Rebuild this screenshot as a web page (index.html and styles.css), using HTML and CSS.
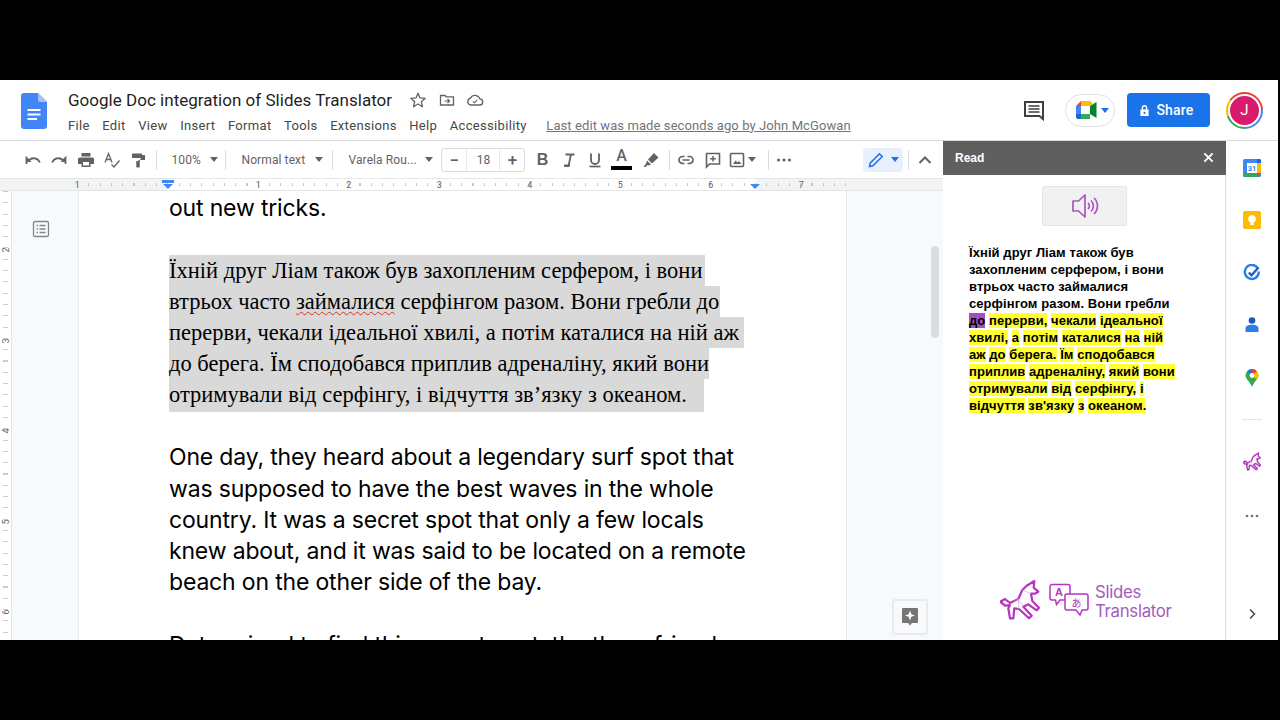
FILE: index.html
```html
<!DOCTYPE html>
<html lang="en">
<head>
<meta charset="utf-8">
<title>Google Doc integration of Slides Translator</title>
<link rel="stylesheet" href="styles.css">
</head>
<body>
<svg class="defs" width="0" height="0" aria-hidden="true">
  <symbol id="unicorn" viewBox="0 0 40 42">
    <path class="uni-line" d="M.3 21.700 5 19 10 23 18.300 19 22.300 10 26.700 5.700 34.300 1 33.700 7.700 38.300 11.700 35 13.700 31 13.700 32.300 21 39 27.700 36.700 30.300 28.300 24.300 23.300 26.700 31.700 35.700 29 38.300 19 29 14.300 28.300 13.300 38.300 10 38.300 8.300 28.300 10 25 5 25.700Z"/>
    <path d="M10 25 18.300 19 23.300 26.700M18.300 19 19 29M22.300 10 31 13.700" fill="none" stroke="#d9a6dc" stroke-width=".7"/>
  </symbol>
</svg>
<main class="app">
  <header class="top">
    <svg class="doc-logo" viewBox="0 0 26 36" width="26" height="36"><path d="M3 0H17L26 9V33A3 3 0 0 1 23 36H3A3 3 0 0 1 0 33V3A3 3 0 0 1 3 0Z" fill="#4285f4"/><path d="M17 0 26 9H19A2 2 0 0 1 17 7Z" fill="#a1c2fa"/><path d="M6.500 16H19.500V18H6.500ZM6.500 20.500H19.500V22.500H6.500ZM6.500 25H16V27H6.500Z" fill="#fff"/></svg>
    <div class="titles">
      <div class="title-row">
        <h1 class="title">Google Doc integration of Slides Translator</h1>
        <svg class="ti" viewBox="0 0 18 18" width="18" height="18"><path d="M9 2.200 11 6.900 16.200 7.300 12.300 10.700 13.500 15.700 9 13 4.500 15.700 5.700 10.700 1.800 7.300 7 6.900Z" fill="none" stroke="#5f6368" stroke-width="1.300" stroke-linejoin="round"/></svg>
        <svg class="ti" viewBox="0 0 18 18" width="18" height="18"><path d="M2.500 4.500H7L8.300 5.800H15.500V14H2.500Z" fill="none" stroke="#5f6368" stroke-width="1.300"/><path d="M6.500 10H11M9.500 8 11.500 10 9.500 12" fill="none" stroke="#5f6368" stroke-width="1.200"/></svg>
        <svg class="ti" viewBox="0 0 18 18" width="18" height="18"><path d="M5 14A3.500 3.500 0 0 1 4.500 7.100 5 5 0 0 1 13.800 7.900 3 3 0 0 1 13.500 14Z" fill="none" stroke="#5f6368" stroke-width="1.300"/><path d="M6.800 10.300 8.500 11.800 11.300 8.800" fill="none" stroke="#5f6368" stroke-width="1.100"/></svg>
      </div>
      <nav class="menu">
        <span>File</span><span>Edit</span><span>View</span><span>Insert</span><span>Format</span><span>Tools</span><span>Extensions</span><span>Help</span><span>Accessibility</span>
        <a class="last-edit">Last edit was made seconds ago by John McGowan</a>
      </nav>
    </div>
    <div class="top-right">
      <svg class="chat" viewBox="0 0 22 22" width="22" height="22"><path d="M2 3H20V20L16.500 17H2Z" fill="none" stroke="#3c4043" stroke-width="2"/><path d="M5.500 7H16.500M5.500 10H16.500M5.500 13H16.500" stroke="#3c4043" stroke-width="1.700"/></svg>
      <div class="meet">
        <svg viewBox="0 0 21 19" width="21" height="19"><path d="M5 0V5H0Z" fill="#ea4335"/><path d="M5 0H14V5H5Z" fill="#fbbc04"/><path d="M0 5H5V13H0Z" fill="#4285f4"/><path d="M0 13H5V18H2A2 2 0 0 1 0 16Z" fill="#1967d2"/><path d="M5 13H14V18H5Z" fill="#34a853"/><path d="M14 5 20.500 1V17L14 13Z" fill="#00832d"/><path d="M14 0 14 5 17 3Z" fill="#fbbc04"/></svg>
        <i class="caret caret-blue"></i>
      </div>
      <button class="share">
        <svg viewBox="0 0 12 14" width="11" height="13"><path d="M3 6V4A3 3 0 0 1 9 4V6H10.500V13H1.500V6ZM4.500 6H7.500V4A1.500 1.500 0 0 0 4.500 4Z" fill="#fff" fill-rule="evenodd"/><circle cx="6" cy="9.500" r="1.200" fill="#1a73e8"/></svg>
        <span>Share</span>
      </button>
      <div class="avatar"><span>J</span></div>
    </div>
  </header>

  <div class="workspace">
    <div class="editor">
      <div class="toolbar">
        <span class="tb w-undo"><svg viewBox="0 0 18 18" width="18" height="18"><path d="M2.500 13V6.800L5 9.300A6.500 6.500 0 0 1 15.800 11.500" fill="none" stroke="#5f6368" stroke-width="1.800"/><path d="M2 5.500V11H7.500Z" fill="#5f6368"/></svg></span>
        <span class="tb"><svg viewBox="0 0 18 18" width="18" height="18"><path d="M15.500 13V6.800L13 9.300A6.500 6.500 0 0 0 2.200 11.500" fill="none" stroke="#5f6368" stroke-width="1.800"/><path d="M16 5.500V11H10.500Z" fill="#5f6368"/></svg></span>
        <span class="tb"><svg viewBox="0 0 18 18" width="18" height="18"><path d="M4.500 2H13.500V5.500H4.500ZM2.500 6.500H15.500A1.500 1.500 0 0 1 17 8V13H13.500V16H4.500V13H1V8A1.500 1.500 0 0 1 2.500 6.500ZM6 11V14.500H12V11Z" fill="#5f6368" fill-rule="evenodd"/></svg></span>
        <span class="tb"><svg viewBox="0 0 18 18" width="18" height="18"><path d="M2 11.500 5.500 2.500 9 11.500M3.300 8.500H7.700" fill="none" stroke="#5f6368" stroke-width="1.300"/><path d="M8.500 13.500 11 16 16.500 9.500" fill="none" stroke="#5f6368" stroke-width="1.300"/></svg></span>
        <span class="tb"><svg viewBox="0 0 18 18" width="18" height="18"><path d="M3 2.500H13V7H3ZM13 4H16V9H9.500V10.500H7.500V16H10.500V10.500" fill="#5f6368"/><path d="M7.500 10H10.500V16.500H7.500Z" fill="#5f6368"/></svg></span>
        <i class="sep sep-1"></i>
        <span class="sel sel-zoom"><span>100%</span><i class="caret"></i></span>
        <i class="sep"></i>
        <span class="sel sel-style"><span>Normal text</span><i class="caret"></i></span>
        <i class="sep"></i>
        <span class="sel sel-font"><span>Varela Rou...</span><i class="caret"></i></span>
        <div class="size">
          <span class="size-btn">−</span><span class="size-val">18</span><span class="size-btn">+</span>
        </div>
        <span class="tb tb-b"><b class="fmt">B</b></span>
        <span class="tb"><svg viewBox="0 0 18 18" width="18" height="18"><path d="M4.500 15H8.500L11 3.500H14.500M5.500 3.500H14.500M4 14.500H10" fill="none" stroke="#5f6368" stroke-width="1.800"/></svg></span>
        <span class="tb"><svg viewBox="0 0 18 18" width="18" height="18"><path d="M5 2.500V9A4 4 0 0 0 13 9V2.500" fill="none" stroke="#5f6368" stroke-width="1.800"/><path d="M3.500 15.500H14.500" stroke="#5f6368" stroke-width="1.700"/></svg></span>
        <span class="tb tb-color"><span class="letter-a">A</span><i class="color-bar"></i></span>
        <span class="tb tb-marker"><svg viewBox="0 0 18 18" width="18" height="18"><path d="M12 2 16.500 6.500 10 12.500 6 8.500ZM5 9.500 9 13.500 7 14.500 5.500 14 3.500 16H1.500L4 12.500Z" fill="#5f6368"/></svg></span>
        <i class="sep sep-2"></i>
        <span class="tb"><svg viewBox="0 0 18 18" width="18" height="18"><path d="M7.500 5.500H5.500A3.500 3.500 0 0 0 5.500 12.500H7.500M10.500 5.500H12.500A3.500 3.500 0 0 1 12.500 12.500H10.500M5.500 9H12.500" fill="none" stroke="#5f6368" stroke-width="1.700"/></svg></span>
        <span class="tb tb-note"><svg viewBox="0 0 18 18" width="18" height="18"><path d="M2.500 2.500H15.500V13H5.500L2.500 16Z" fill="none" stroke="#5f6368" stroke-width="1.600"/><path d="M9 5V10.500M6.200 7.800H11.800" stroke="#5f6368" stroke-width="1.500"/></svg></span>
        <span class="tb tb-img"><svg viewBox="0 0 18 18" width="18" height="18"><rect x="2.500" y="2.500" width="13" height="13" rx="1" fill="none" stroke="#5f6368" stroke-width="1.600"/><path d="M5 13 7.500 9.500 9.500 11.500 11 10 13.500 13Z" fill="#5f6368"/></svg><i class="caret"></i></span>
        <i class="sep sep-3"></i>
        <span class="tb tb-dots"><svg viewBox="0 0 18 18" width="18" height="18"><circle cx="3.500" cy="9" r="1.500" fill="#5f6368"/><circle cx="9" cy="9" r="1.500" fill="#5f6368"/><circle cx="14.500" cy="9" r="1.500" fill="#5f6368"/></svg></span>
        <span class="mode"><svg viewBox="0 0 18 18" width="18" height="18"><path d="M2.500 15.500 3.300 12 12.500 2.800 15.200 5.500 6 14.700Z" fill="none" stroke="#1a73e8" stroke-width="1.500"/></svg><i class="caret caret-blue"></i></span>
        <i class="sep sep-4"></i>
        <span class="tb tb-up"><svg viewBox="0 0 18 18" width="18" height="18"><path d="M3.500 12 9 6.500 14.500 12" fill="none" stroke="#5f6368" stroke-width="2"/></svg></span>
      </div>

      <div class="ruler">
        <div class="ruler-nums">
          <span>1</span><span class="zero"><i class="indent"></i></span><span>1</span><span>2</span><span>3</span><span>4</span><span>5</span><span>6</span><span>7</span>
        </div>
        <i class="indent-right"></i>
      </div>

      <div class="doc-area">
        <aside class="v-ruler">
          <span>2</span><span>3</span><span>4</span><span>5</span><span>6</span>
        </aside>
        <div class="gutter">
          <svg viewBox="0 0 18 18" width="18" height="18"><rect x="1.500" y="1.500" width="15" height="15" rx="1.500" fill="none" stroke="#80868b" stroke-width="1.300"/><path d="M4.500 5.500H6M7.500 5.500H13.500M4.500 9H6M7.500 9H13.500M4.500 12.500H6M7.500 12.500H13.500" stroke="#80868b" stroke-width="1.300"/></svg>
        </div>
        <article class="page">
          <p class="en">out new tricks.</p>
          <div class="uk">
            <div class="hl">Їхній друг Ліам також був захопленим серфером, і вони</div>
            <div class="hl hl-2">втрьох часто <span class="spell">займалися</span> серфінгом разом. Вони гребли до</div>
            <div class="hl hl-3">перерви, чекали ідеальної хвилі, а потім каталися на ній аж</div>
            <div class="hl hl-4">до берега. Їм сподобався приплив адреналіну, який вони</div>
            <div class="hl hl-5">отримували від серфінгу, і відчуття зв’язку з океаном.</div>
          </div>
          <p class="en">One day, they heard about a legendary surf spot that<br>was supposed to have the best waves in the whole<br>country. It was a secret spot that only a few locals<br>knew about, and it was said to be located on a remote<br>beach on the other side of the bay.</p>
          <p class="en">Determined to find this secret spot, the three friends</p>
        </article>
        <div class="doc-right">
          <i class="thumb"></i>
          <button class="explore"><svg viewBox="0 0 18 20" width="18" height="20"><path d="M2 1H16A1 1 0 0 1 17 2V15A1 1 0 0 1 16 16H11L9 18.500 7 16H2A1 1 0 0 1 1 15V2A1 1 0 0 1 2 1Z" fill="#757575"/><path d="M9 3.500 10.300 7.200 14 8.500 10.300 9.800 9 13.500 7.700 9.800 4 8.500 7.700 7.200Z" fill="#fff"/></svg></button>
        </div>
      </div>
    </div>

    <aside class="panel">
      <div class="panel-head"><span>Read</span><svg viewBox="0 0 12 12" width="11" height="11"><path d="M1.500 1.500 10.500 10.500M10.500 1.500 1.500 10.500" stroke="#fff" stroke-width="2"/></svg></div>
      <div class="panel-body">
        <button class="speak"><svg viewBox="0 0 28 26" width="28" height="26"><path d="M2 8H7.500L14 2V24L7.500 18H2Z" fill="none" stroke="#a855c0" stroke-width="1.700" stroke-linejoin="round"/><path d="M17 10A4 4 0 0 1 17 16M20 7.500A7.500 7.500 0 0 1 20 18.500M23 5A11 11 0 0 1 23 21" fill="none" stroke="#a855c0" stroke-width="1.700"/></svg></button>
        <div class="read-text">
          <div>Їхній друг Ліам також був</div>
          <div>захопленим серфером, і вони</div>
          <div>втрьох часто займалися</div>
          <div>серфінгом разом. Вони гребли</div>
          <div><mark class="cur">до</mark> <mark>перерви,</mark> <mark>чекали</mark> <mark>ідеальної</mark></div>
          <div><mark>хвилі,</mark> <mark>а</mark> <mark>потім</mark> <mark>каталися</mark> <mark>на</mark> <mark>ній</mark></div>
          <div><mark>аж</mark> <mark>до</mark> <mark>берега.</mark> <mark>Їм</mark> <mark>сподобався</mark></div>
          <div><mark>приплив</mark> <mark>адреналіну,</mark> <mark>який</mark> <mark>вони</mark></div>
          <div><mark>отримували</mark> <mark>від</mark> <mark>серфінгу,</mark> <mark>і</mark></div>
          <div><mark>відчуття</mark> <mark>зв'язку</mark> <mark>з</mark> <mark>океаном.</mark></div>
        </div>
        <div class="brand">
          <svg class="brand-uni" width="40" height="42"><use href="#unicorn"/></svg>
          <svg class="brand-bub" viewBox="0 0 40 36" width="40" height="36"><path d="M3 1.500H19A2 2 0 0 1 21 3.500V15A2 2 0 0 1 19 17H11L7.500 21.500 6.500 17H3A2 2 0 0 1 1 15V3.500A2 2 0 0 1 3 1.500Z" fill="#fff" stroke="#b536bd" stroke-width="1.500"/><path d="M18 11H37A2 2 0 0 1 39 13V25A2 2 0 0 1 37 27H33L31 32 27 27H18A2 2 0 0 1 16 25V13A2 2 0 0 1 18 11Z" fill="#fff" stroke="#b536bd" stroke-width="1.500"/><text x="10" y="13" class="bub-a">A</text><text x="27.500" y="23.500" class="bub-j">あ</text></svg>
          <div class="brand-name">Slides<br>Translator</div>
        </div>
      </div>
    </aside>

    <aside class="rail">
      <svg class="r-ic" viewBox="0 0 18 18" width="18" height="18"><rect width="18" height="18" rx="1.500" fill="#4285f4"/><path d="M14 0H16.500A1.500 1.500 0 0 1 18 1.500V4H14Z" fill="#1967d2"/><path d="M14 4H18V14H14Z" fill="#fbbc04"/><path d="M4 14H14V18H1.500A1.500 1.500 0 0 1 4 14Z" fill="#34a853"/><path d="M14 14H18L14 18Z" fill="#ea4335"/><rect x="4" y="4" width="10" height="10" fill="#fff"/><text x="9" y="12" class="cal">31</text></svg>
      <svg class="r-ic" viewBox="0 0 18 18" width="18" height="18"><rect width="18" height="18" rx="2" fill="#fbbc04"/><circle cx="9" cy="8" r="3.800" fill="#fff"/><rect x="7.300" y="11.500" width="3.400" height="2.500" fill="#fff"/></svg>
      <svg class="r-ic r-task" viewBox="0 0 18 18" width="18" height="18"><path d="M14.800 4.300A7 7 0 1 0 15.800 7.500" fill="none" stroke="#2b7de9" stroke-width="2.400"/><path d="M5.800 8.700 8.500 11.300 15.500 3.500" fill="none" stroke="#1a5fd0" stroke-width="2.400"/></svg>
      <svg class="r-ic r-person" viewBox="0 0 18 18" width="18" height="18"><circle cx="9" cy="4.500" r="3.300" fill="#1a56c4"/><path d="M2.500 16V12.500C2.500 10 5 8.800 9 8.800S15.500 10 15.500 12.500V16Z" fill="#2b7de9"/></svg>
      <svg class="r-ic" viewBox="0 0 18 20" width="18" height="20"><path d="M9 1A6.500 6.500 0 0 1 15.500 7.500C15.500 11 11 13.500 9 19 7 13.500 2.500 11 2.500 7.500A6.500 6.500 0 0 1 9 1Z" fill="#34a853"/><path d="M4 3.500A6.500 6.500 0 0 1 9 1L9 7.500Z" fill="#1a73e8"/><path d="M9 1A6.500 6.500 0 0 1 14 3.300L9 7.500Z" fill="#ea4335"/><path d="M14 3.300A6.500 6.500 0 0 1 15.500 7.500C15.500 9 14.500 10.300 13.500 11.500L9 7.500Z" fill="#fbbc04"/><circle cx="9" cy="7.500" r="2.400" fill="#fff"/></svg>
      <i class="rail-div"></i>
      <svg class="r-ic r-uni" width="18" height="20"><use href="#unicorn"/></svg>
      <svg class="r-ic r-dots" viewBox="0 0 14 4" width="14" height="4"><circle cx="2" cy="2" r="1.300" fill="#70757a"/><circle cx="7" cy="2" r="1.300" fill="#70757a"/><circle cx="12" cy="2" r="1.300" fill="#70757a"/></svg>
      <svg class="r-chev" viewBox="0 0 10 12" width="10" height="12"><path d="M3 1.500 7.500 6 3 10.500" fill="none" stroke="#3c4043" stroke-width="1.400"/></svg>
    </aside>
  </div>
</main>
</body>
</html>
```
FILE: styles.css
```css
* { box-sizing: border-box; }
html, body { margin: 0; height: 720px; overflow: hidden; background: #000; }
.defs { display: block; height: 0; }
i { display: block; font-style: normal; }
button { font: inherit; border: 0; padding: 0; }
svg { display: block; flex: none; }
.uni-line { fill: none; stroke: #b536bd; stroke-width: var(--uni-w, 2.200); stroke-linejoin: round; }

.app {
  margin-top: 80px; width: 1278px; height: 560px; background: #fff;
  display: flex; flex-direction: column; overflow: hidden;
  font-family: Roboto, "Liberation Sans", sans-serif; color: #444746;
}

/* header */
.top { height: 61px; flex: none; display: flex; align-items: flex-start; border-bottom: 1px solid #dadce0; position: relative; }
.doc-logo { margin: 13px 0 0 21px; }
.titles { margin: 0 0 0 21px; width: 900px; }
.title-row { display: flex; align-items: center; height: 22px; margin-top: 9px; }
.title { margin: 0 5px 0 0; font: 400 17px/22px Roboto, sans-serif; color: #1f1f1f; letter-spacing: .02px; white-space: nowrap; width: 336px; }
.ti { margin-right: 10.500px; }
.menu { display: flex; align-items: center; height: 20px; margin-top: 4px; font-size: 13px; letter-spacing: .32px; color: #444746; white-space: nowrap; }
.menu span { margin-right: 12.600px; }
.last-edit { margin-left: 7px; color: #70757a; text-decoration: underline; letter-spacing: .09px; }
.top-right { margin-left: auto; display: flex; align-items: center; height: 60px; padding-right: 15px; }
.chat { margin-right: 20px; }
.meet { width: 50px; height: 33px; border: 1px solid #e0e0e0; border-radius: 17px; display: flex; align-items: center; gap: 4px; padding-left: 10px; margin-right: 12px; }
.share { width: 83px; height: 34px; border-radius: 4px; background: #1a73e8; color: #fff; font: 500 14px Roboto, sans-serif; letter-spacing: .2px; display: flex; align-items: center; justify-content: center; gap: 6px; padding-right: 4px; }
.avatar { width: 37px; height: 37px; margin-left: 16px; border-radius: 50%; background: conic-gradient(#ea4335 0 25%, #4285f4 25% 50%, #34a853 50% 70%, #fbbc04 70% 85%, #ea4335 85%); display: flex; align-items: center; justify-content: center; }
.avatar span { width: 33px; height: 33px; border-radius: 50%; border: 2px solid #fff; background: #d81b6c; color: #fff; font-size: 15px; display: flex; align-items: center; justify-content: center; }

/* workspace */
.workspace { flex: 1; min-height: 0; display: flex; }
.editor { width: 943px; flex: none; display: flex; flex-direction: column; min-height: 0; }

/* toolbar */
.toolbar { height: 37px; flex: none; display: flex; align-items: center; padding-left: 20px; color: #5f6368; }
.tb { width: 26.300px; height: 24px; flex: none; display: flex; align-items: center; justify-content: center; }
.sep { width: 1px; height: 20px; background: #dadce0; flex: none; }
.sep-1 { margin-left: 5px; }
.sep-2 { margin-left: 5px; margin-right: 3px; }
.sep-3 { margin-left: 2px; }
.sep-4 { margin-left: 5px; }
.caret { width: 0; height: 0; border: 4px solid transparent; border-top: 5px solid #5f6368; border-bottom: 0; flex: none; }
.caret-blue { border-top-color: #1a73e8; }
.sel { display: flex; align-items: center; justify-content: space-between; font-size: 12px; letter-spacing: .1px; height: 24px; flex: none; }
.sel-zoom { width: 68px; padding: 0 7px 0 14px; }
.sel-style { width: 106px; padding: 0 9px 0 15px; }
.sel-font { width: 108px; padding: 0 8px 0 15px; }
.size { display: flex; width: 84px; height: 24px; border: 1px solid #dadce0; border-radius: 3px; align-items: center; flex: none; font-size: 12px; }
.size-btn { width: 24px; text-align: center; font-size: 17px; line-height: 22px; font-weight: 500; }
.size-val { flex: 1; height: 22px; line-height: 22px; text-align: center; border: solid #e8eaed; border-width: 0 1px; }
.tb-b { margin-left: 4px; }
.fmt { font: 700 16px "Liberation Sans", sans-serif; }
.tb-color { flex-direction: column; }
.letter-a { font-size: 16px; line-height: 18px; font-weight: 500; margin-top: -2px; }
.color-bar { width: 21px; height: 4px; background: #000; margin-top: 1px; }
.tb-marker { margin-left: 3px; }
.tb-note { margin-left: 1px; }
.tb-img { gap: 2px; width: 42px; justify-content: flex-start; padding-left: 4px; margin-left: -3px; }
.tb-dots { margin-left: 2px; }
.mode { width: 40px; height: 24px; margin-left: 66px; background: #e8f0fe; border-radius: 4px; display: flex; align-items: center; gap: 6px; padding-left: 4px; flex: none; }
.tb-up { margin-left: 3px; }

/* ruler */
.ruler { height: 13px; flex: none; background: #f1f3f4; border-top: 1px solid #e3e5e7; border-bottom: 1px solid #e3e5e7; position: relative; overflow: hidden;
  background-image: linear-gradient(#fff, #fff);
  background-size: 588px 100%;
  background-position: 168px 0;
  background-repeat: no-repeat; }
.ruler::before { content: ""; position: absolute; left: 77px; right: 92px; top: 4px; height: 3px; background: repeating-linear-gradient(90deg, #c4c7cb 0 1px, transparent 1px 11.300px); }
.ruler-nums { display: flex; padding-left: 32px; height: 11px; align-items: center; font-size: 9px; color: #5f6368; position: relative; }
.ruler-nums span { width: 90.500px; text-align: center; flex: none; position: relative; }
.ruler-nums .zero { align-self: stretch; }
.indent { position: absolute; left: 39px; top: 1px; width: 12px; height: 3px; background: #4285f4; }
.indent::after { content: ""; position: absolute; left: 1px; top: 4px; border: 5px solid transparent; border-top: 5px solid #4285f4; border-bottom: 0; }
.indent-right { position: absolute; left: 750px; top: 5px; border: 5.500px solid transparent; border-top: 5px solid #4285f4; border-bottom: 0; }

/* document */
.doc-area { flex: 1; min-height: 0; display: flex; background: #f8f9fa; }
.v-ruler { width: 12px; flex: none; border-right: 1px solid #e3e5e7; background: #fff repeating-linear-gradient(180deg, #c9ccd0 0 1px, transparent 1px 11.300px) 3px 0/5px 100% no-repeat; padding-top: 56px; display: flex; flex-direction: column; align-items: center; }
.v-ruler span { height: 90.500px; font-size: 9px; color: #5f6368; writing-mode: vertical-rl; transform: rotate(180deg); line-height: 12px; flex: none; text-align: right; }
.gutter { width: 66px; flex: none; padding: 29px 0 0 20px; }
.page { width: 769px; flex: none; background: #fff; border: solid #e8eaed; border-width: 0 1px; padding: 2px 0 0 90px; overflow: hidden; color: #000; }
.en { margin: 0 0 31px; font: 400 23px/31.250px Inter, sans-serif; letter-spacing: -.17px; white-space: nowrap; }
.uk { margin-bottom: 30px; font: 400 22.500px/31px "Liberation Serif", serif; white-space: nowrap; }
.hl { width: fit-content; background: #d9d9d9; padding-right: 3px; }
.hl-2 { padding-right: 1px; }
.hl-3 { padding-right: 5px; }
.hl-4 { padding-right: 0; }
.hl-5 { padding-right: 17px; padding-bottom: 2px; }
.spell { text-decoration: underline wavy #d93025 1px; text-underline-offset: 2px; }
.doc-right { width: 96px; flex: none; position: relative; }
.thumb { position: absolute; left: 84px; top: 55px; width: 8px; height: 92px; background: #dadce0; border-radius: 4px; }
.explore { position: absolute; left: 45px; top: 408px; width: 36px; height: 36px; background: #f8f9fa; border: 2px solid #e8eaed; border-radius: 3px; display: flex; align-items: center; justify-content: center; }

/* side panel */
.panel { width: 283px; flex: none; display: flex; flex-direction: column; border-right: 1px solid #dadce0; min-height: 0; margin-top: -1px; }
.panel-head { height: 35px; flex: none; background: #5f5f5f; color: #fff; display: flex; align-items: center; justify-content: space-between; padding: 0 12px; font: 700 12px "Liberation Sans", sans-serif; margin-right: -1px; }
.panel-body { flex: 1; min-height: 0; display: flex; flex-direction: column; padding: 11px 0 0 26px; }
.speak { width: 85px; height: 40px; margin-left: 73px; background: #f1f1f1; border: 1px solid #e5e5e5; border-radius: 2px; display: flex; align-items: center; justify-content: center; flex: none; }
.read-text { margin-top: 18px; font: 700 13px/17px "Liberation Sans", sans-serif; letter-spacing: .07px; color: #000; white-space: nowrap; }
mark { background: #ffff33; color: #000; }
mark.cur { background: #a44fc4; }
.brand { margin-top: auto; display: flex; align-items: center; padding-left: 31px; padding-bottom: 18px; }
.brand-uni { margin-right: 9px; }
.brand-bub { margin-right: 6px; }
.bub-a { font: 700 11px "Liberation Sans", sans-serif; fill: #b536bd; text-anchor: middle; }
.bub-j { font: 400 10px "Noto Sans CJK JP", sans-serif; fill: #b536bd; text-anchor: middle; }
.brand-name { font: 400 16.800px/19.500px Inter, sans-serif; color: #a45cbc; letter-spacing: -.3px; margin-top: 2px; }

/* rail */
.rail { flex: 1; display: flex; flex-direction: column; align-items: center; padding-top: 18px; }
.r-ic { margin-bottom: 34px; }
.r-task, .r-person { margin-top: 1px; }
.r-task { margin-bottom: 33px; }
.r-uni { --uni-w: 3.200; }
.rail-div { width: 20px; height: 1px; background: #e3e5e7; margin: -3px 0 32px; }
.r-dots { margin: 8px 0 0; }
.r-chev { margin-top: 90px; }
.cal { font: 700 7.500px "Roboto", sans-serif; fill: #4285f4; text-anchor: middle; }
```
